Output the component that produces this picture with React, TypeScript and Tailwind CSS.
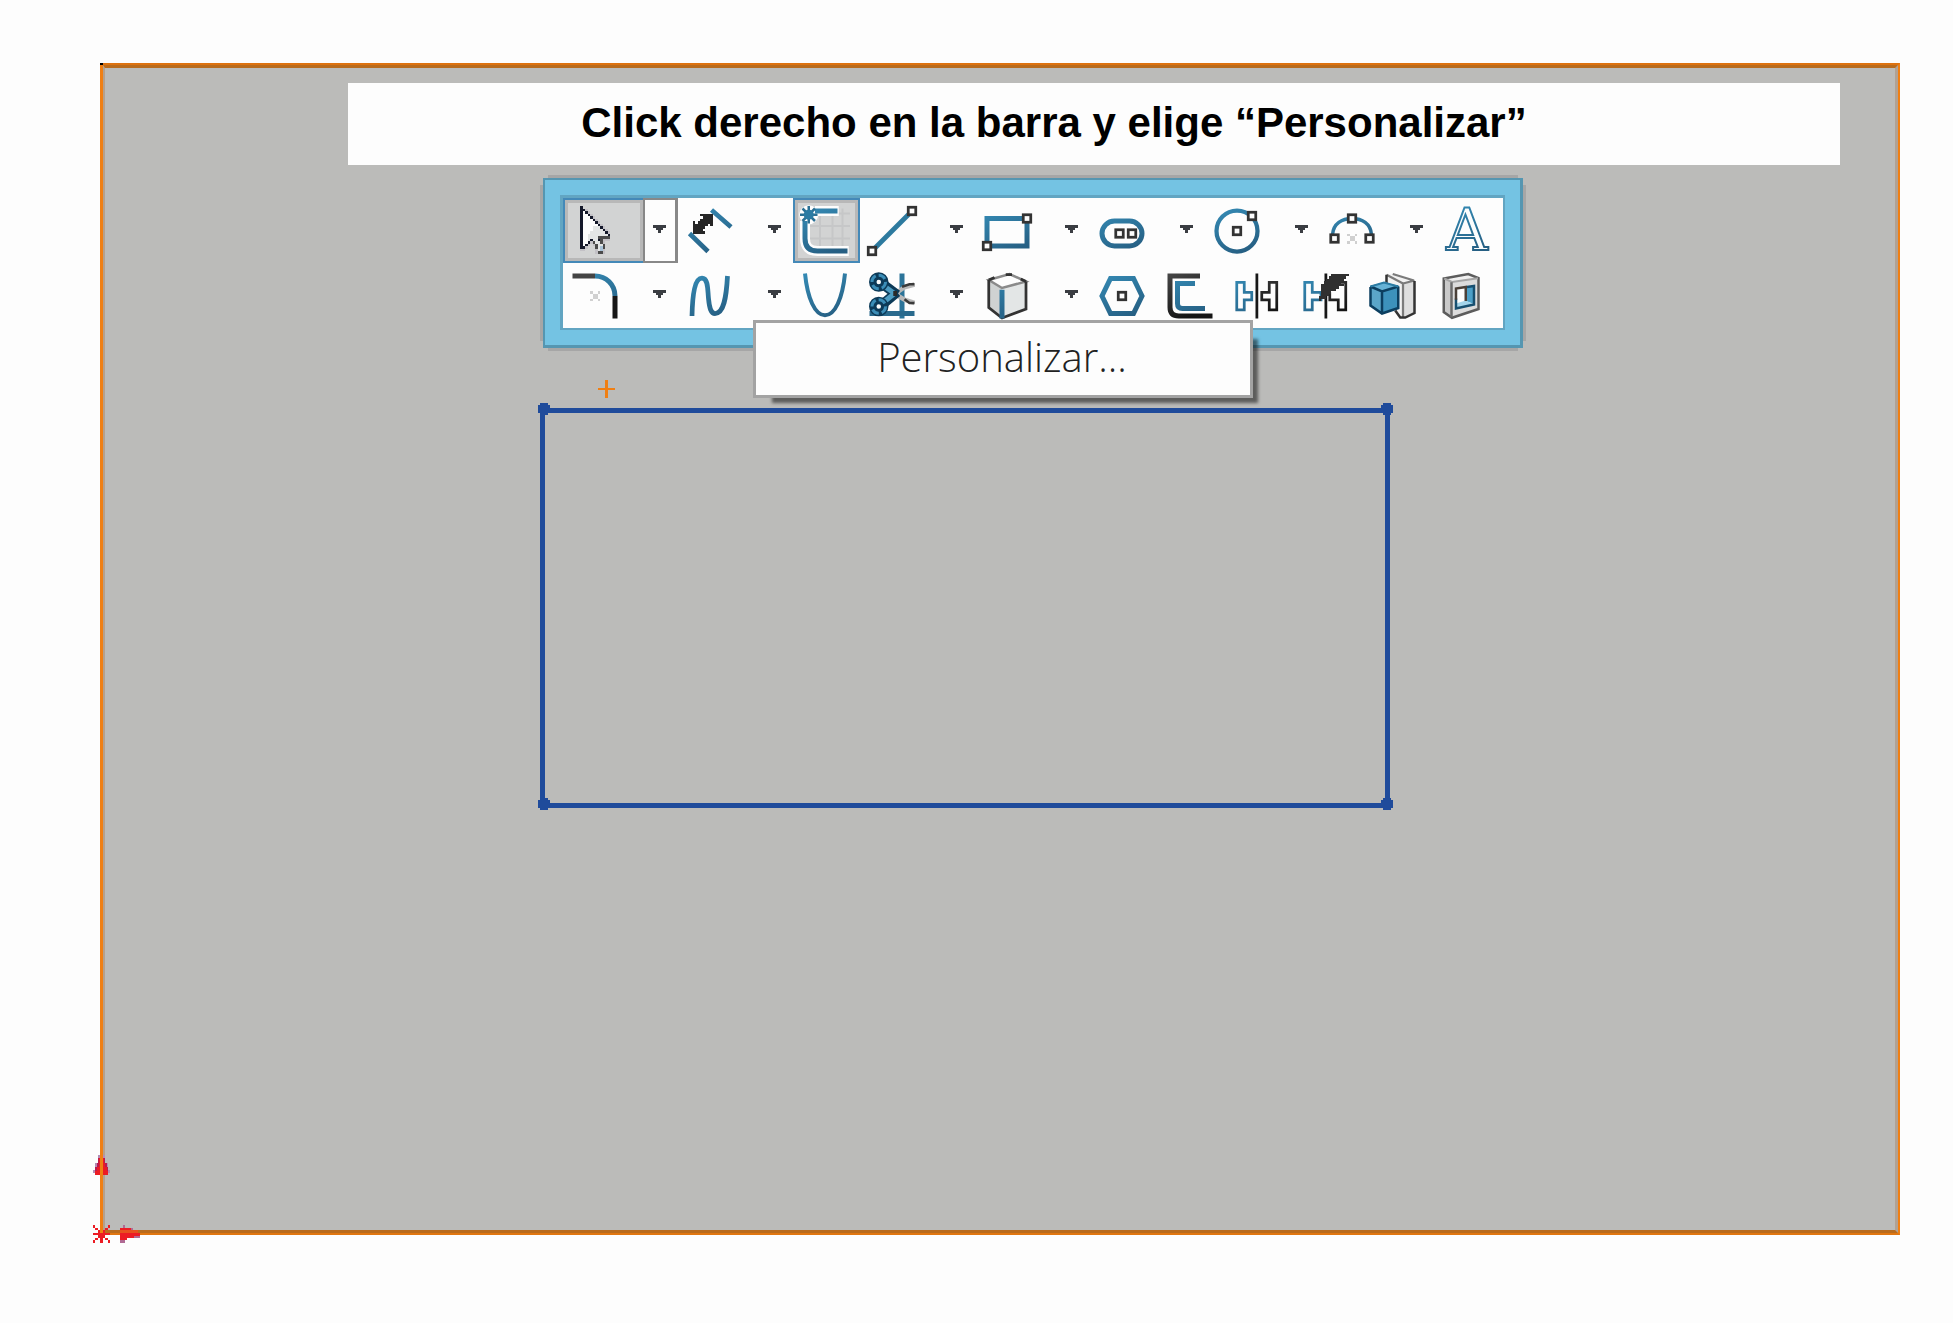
import React, { useState } from "react";

/* =========================
   PIXEL HELPERS
========================== */
const CURSOR = [
  "K",
  "KKg",
  "KWKg",
  "KWWKg",
  "KWWWKg",
  "KWWWWKg",
  "KWWWWWKg",
  "KWWWWWWKg",
  "KWWWWGGGKg",
  "KWWWWGGGGKg",
  "KWWWGGGGGGKg",
  "KWWGGGGGGGGK",
  "KWWGGGGDDDDD",
  "KWWGKGGKDggg",
  "KWWKgDGGDg",
  "KWKg.gDGGD",
  "KKg...DGBD",
  "gg....gGBg",
  "......gDDg",
];

const PALETTE: Record<string, string> = {
  K: "#14182a",
  W: "#fdfdfd",
  G: "#e4e6e6",
  g: "#c3c1c6",
  D: "#4b4b4b",
  B: "#a9c3d8",
};

const Pixels = ({ rows, x, y }: { rows: string[]; x: number; y: number }) => (
  <g shapeRendering="crispEdges">
    {rows.map((row, r) =>
      row.split("").map((c, i) =>
        PALETTE[c] ? (
          <rect key={`${r}-${i}`} x={x + i} y={y + r} width="1" height="1" fill={PALETTE[c]} />
        ) : null
      )
    )}
  </g>
);

const Handle = ({ x, y }: { x: number; y: number }) => (
  <rect
    x={x + 0.5}
    y={y + 0.5}
    width="3"
    height="3"
    fill="#fdfdfd"
    stroke="#333333"
    strokeWidth="1.1"
  />
);

const Ghost = ({ x, y }: { x: number; y: number }) => (
  <path
    d={`M${x} ${y}h1v1h2v-1h1v1h-1v2h1v1h-1v-1h-2v1h-1v-1h1v-2h-1z`}
    fill="#d0d0d0"
    shapeRendering="crispEdges"
  />
);

const Icon = ({ children }: { children: React.ReactNode }) => (
  <svg viewBox="0 0 20 20" className="h-[50px] w-[50px] shrink-0 overflow-visible" fill="none" aria-hidden="true">
    {children}
  </svg>
);

/* =========================
   ICONS
========================== */
const BLUE = "url(#blue)";

const icons = {
  select: <Pixels rows={CURSOR} x={4} y={0} />,
  dimension: (
    <>
      <path d="M10.6 1.6 18.4 8.4M1.8 11 9.2 18.2" stroke={BLUE} strokeWidth="1.9" />
      <path
        d="M6 3H11V8H10V7H9V8H8V9H7V10H8V11H3V6H4V7H5V6H6V5H7V4H6Z"
        fill="#262626"
        shapeRendering="crispEdges"
      />
    </>
  ),
  sketch: (
    <>
      <path d="M8 1V19M13 1V19M17 1V19M4 8H20M4 13H20M6 3H20" stroke="#c6c7c8" strokeWidth="0.8" />
      <path d="M6 2H15.5M2 6V13Q2 18 7 18H19.5" stroke="#fdfdfd" strokeWidth="4" />
      <circle cx="3.5" cy="3.5" r="3.8" fill="#fdfdfd" />
      <path d="M6 2H15M2 6V13Q2 18 7 18H19" stroke={BLUE} strokeWidth="2" />
      <path d="M3.5 0V7M0 3.5H7M1 1 6 6M6 1 1 6" stroke="#2b7094" strokeWidth="1" />
      <circle cx="3.5" cy="3.5" r="2" fill="#2b7ba3" />
    </>
  ),
  line: (
    <>
      <path d="M3 17 17 3" stroke="#2d7a9f" strokeWidth="1.9" />
      <Handle x={0} y={16} />
      <Handle x={16} y={0} />
    </>
  ),
  rectangle: (
    <>
      <rect x="2" y="5" width="16" height="11" stroke={BLUE} strokeWidth="2" />
      <Handle x={0} y={14} />
      <Handle x={16} y={3} />
    </>
  ),
  slot: (
    <>
      <rect x="2" y="6" width="16" height="10" rx="5" stroke={BLUE} strokeWidth="2" />
      <Handle x={7} y={9} />
      <Handle x={12} y={9} />
    </>
  ),
  circle: (
    <>
      <circle cx="10" cy="10" r="8.2" stroke={BLUE} strokeWidth="1.7" />
      <Handle x={8} y={8} />
      <Handle x={14} y={2} />
    </>
  ),
  arc: (
    <>
      <path d="M2.2 11.5C2.5 7 6 5 10 5S17.5 7 17.8 11.5" stroke={BLUE} strokeWidth="1.4" />
      <Handle x={1} y={11} />
      <Handle x={15} y={11} />
      <Handle x={8} y={3} />
      <Ghost x={8} y={11} />
    </>
  ),
  text: (
    <text
      x="10"
      y="17.6"
      textAnchor="middle"
      fontSize="23"
      stroke={BLUE}
      strokeWidth="0.8"
      fill="#fdfdfd"
      className="font-['DejaVu_Serif',serif]"
    >
      A
    </text>
  ),
  fillet: (
    <>
      <rect x="1" y="1" width="9" height="2" fill="#444444" />
      <path d="M10 2C14.5 2 18 5.5 18 10" stroke={BLUE} strokeWidth="2" />
      <rect x="17" y="10" width="2" height="9" fill="#171717" />
      <Ghost x={8} y={8} />
    </>
  ),
  spline: (
    <path
      d="M2.8 18C3 9 4 2.9 6.8 2.9C9.3 2.9 9 7 9.4 11C9.8 15 10.4 17 12 17C15.5 17 16.5 11 17 2"
      stroke={BLUE}
      strokeWidth="1.9"
    />
  ),
  parabola: (
    <path d="M2 1C3 11 6 17.7 10 17.7S17 11 18 1" stroke={BLUE} strokeWidth="1.6" />
  ),
  trim: (
    <>
      <rect x="13" y="1" width="2" height="18" fill="#2c7499" />
      <rect x="1" y="16" width="18" height="2" fill="#2a6a8d" />
      <path d="M10 10 15 6.5 19 5.4M10 8.5 15 11.5 19 12.8" stroke="#b9b9b9" strokeWidth="1.8" />
      <path d="M14 6.3 17 5.3H19M15 11.3 17 12.8H19" stroke="#3a3a3a" strokeWidth="1" />
      <path d="M6 5 12 9.5M6 13.5 12 8.5" stroke="#0c3a58" strokeWidth="4" />
      <path d="M6 5.4 11 9M6 13 11 9" stroke="#4d9cc2" strokeWidth="2" />
      <circle cx="4.7" cy="4.4" r="2.4" stroke="#0c3a58" strokeWidth="3" fill="#fdfdfd" />
      <circle cx="4.7" cy="14.2" r="2.4" stroke="#0c3a58" strokeWidth="3" fill="#fdfdfd" />
      <circle cx="4.7" cy="4.4" r="2.7" stroke="#3b8db7" strokeWidth="1.2" strokeDasharray="3 1.2" />
      <circle cx="4.7" cy="14.2" r="2.7" stroke="#3b8db7" strokeWidth="1.2" strokeDasharray="3 1.2" />
      <rect x="10.5" y="8" width="1.5" height="2" fill="#2a2a2a" />
    </>
  ),
  solid: (
    <>
      <path d="M2.7 3.6 11 1.2 17.6 4.2V15.2L8 18.6 2.7 14.6Z" fill="#e3e6e6" />
      <path d="M2.7 3.6 8 6.8V18.6L2.7 14.6Z" fill="#cfd2d2" />
      <path d="M2.7 3.6 11 1.2 17.6 4.2 8 6.8Z" fill="#fdfdfd" />
      <path d="M2.7 3.6 11 1.2 17.6 4.2 8 6.8Z" stroke="#8a8a8a" strokeWidth="1" />
      <path d="M2.7 3.6V14.6L8 18.8 17.6 15.2V4.2" stroke="#333333" strokeWidth="1.1" />
      <path d="M2.7 3.6 5 2.6M9.5 1.4 12 1.4M15.5 3.2 17.6 4.2" stroke="#333333" strokeWidth="1.1" />
      <rect x="7" y="7.5" width="2" height="11.5" fill={BLUE} />
    </>
  ),
  polygon: (
    <>
      <path d="M5.4 3H14.6L18 10 14.6 17H5.4L2 10Z" stroke={BLUE} strokeWidth="2" />
      <Handle x={8} y={8} />
    </>
  ),
  offset: (
    <>
      <path d="M14 2H2V14.5Q2 18 5.5 18H19" stroke="url(#dark)" strokeWidth="2" />
      <path d="M12 5H5V13Q5 15 7 15H16" stroke={BLUE} strokeWidth="2" />
    </>
  ),
  mirror: (
    <>
      <path d="M1.5 4.5H4.5V8.5H7.5V11.5H4.5V15.5H1.5Z" stroke={BLUE} strokeWidth="1.1" />
      <path d="M17.5 4.5H14.5V8.5H11.5V11.5H14.5V15.5H17.5Z" stroke="url(#dark)" strokeWidth="1.1" />
      <rect x="9" y="1" width="1.1" height="18" fill="#171717" />
    </>
  ),
  dynamicMirror: (
    <>
      <path d="M1.5 4.5H4.5V8.5H8V11.5H4.5V15.5H1.5Z" stroke={BLUE} strokeWidth="1.1" />
      <path d="M15.5 4.5H17.9V15.5H14.9V11.5H11.5V8.5" stroke="url(#dark)" strokeWidth="1.1" />
      <rect x="9.4" y="1" width="1.1" height="18" fill="#171717" />
      <path
        d="M12 1H19V2H18V3H17V4H16V5H17V6H15V7H14V8H12V9H11V10H10V11H8V12H7V10H8V5H9V4H10V3H11V2H12Z"
        fill="#303030"
        shapeRendering="crispEdges"
      />
    </>
  ),
  bossCut: (
    <>
      <path d="M6.5 1.6 9.5 1 18.3 3.9V17L14 19 6.5 14Z" fill="#f2f2f2" />
      <path d="M13.8 5.2 18.2 3.8V16.8L13.8 18.5Z" fill="#dedede" />
      <path d="M7 1.5 13.6 5M13.6 5V18.6M13.6 5 18.2 3.8M9.5 1.2 18 3.8" stroke="#7b7b7b" strokeWidth="0.9" />
      <path d="M7 1.5V6M18.2 4V16.8L14.5 18.6H12.5L10.5 15.8" stroke="#333333" strokeWidth="1" />
      <path d="M0.4 6 6 4.6 12 6V15L5.2 17 0.4 14Z" fill="#3d92bc" />
      <path d="M0.4 6 6 4.4 12 6 5.2 8.2Z" fill="#66b2d6" />
      <path d="M0.8 6.5 5 8.5V16.6L0.8 13.8Z" fill="#5ba6c9" />
      <path d="M0.6 6.4V13.8L5.2 17 11.7 14.8V6.2M0.6 6.2 5.2 8.2 11.7 6.2M5.2 8.2V16.8" stroke="#0c3f60" strokeWidth="1" />
      <path d="M0.6 6.2 6 4.6 11.7 6.2" stroke="#2b7ba3" strokeWidth="0.8" />
    </>
  ),
  shell: (
    <>
      <path d="M2.7 3 12 1.2 16.6 2.8V15.2L6 18.8 2.7 16.5Z" fill="#f0f0f0" />
      <path d="M2.7 3 6 4.5V18.6L2.7 16.5Z" fill="#c9c9c9" />
      <path d="M6 4.4 16.6 2.8V15.2L6 18.6Z" fill="#dcdcdc" />
      <path d="M2.7 3V16.4L6 18.7 16.6 15.2V2.8L12.5 1.2 2.7 3Z" stroke="#5c5c5c" strokeWidth="1" />
      <path d="M2.9 3 6 4.4 16.4 2.9" stroke="#a5a5a5" strokeWidth="0.8" />
      <path d="M5.8 4.5V18.4" stroke="#6c6c6c" strokeWidth="1" />
      <path d="M7.6 7 14.8 6V13.6L7.6 15Z" fill="#fdfdfd" />
      <path d="M11.5 6.4 14.8 6V13.2L11.5 12Z" fill="#4c9fc7" />
      <path d="M7.6 15V13L11.5 11.8 14.8 13.4Z" fill="#a4d4ea" />
      <path d="M7.6 11V15L14.8 13.4V6L12 6.4" stroke="#174f70" strokeWidth="1" />
      <path d="M7.6 11.5V7L11.5 6.4V12" stroke="#4a4038" strokeWidth="1" />
    </>
  ),
};

type IconName = keyof typeof icons;
type Tool = { id: IconName; label: string; menu?: boolean; toggle?: boolean };

const ROWS: Tool[][] = [
  [
    { id: "select", label: "Seleccionar", menu: true },
    { id: "dimension", label: "Cota inteligente", menu: true },
    { id: "sketch", label: "Croquis", toggle: true },
    { id: "line", label: "Línea", menu: true },
    { id: "rectangle", label: "Rectángulo", menu: true },
    { id: "slot", label: "Ranura", menu: true },
    { id: "circle", label: "Círculo", menu: true },
    { id: "arc", label: "Arco", menu: true },
    { id: "text", label: "Texto" },
  ],
  [
    { id: "fillet", label: "Redondeo", menu: true },
    { id: "spline", label: "Spline", menu: true },
    { id: "parabola", label: "Parábola", toggle: true },
    { id: "trim", label: "Recortar", menu: true },
    { id: "solid", label: "Convertir", menu: true },
    { id: "polygon", label: "Polígono" },
    { id: "offset", label: "Equidistanciar" },
    { id: "mirror", label: "Simetría" },
    { id: "dynamicMirror", label: "Simetría dinámica" },
    { id: "bossCut", label: "Extruir" },
    { id: "shell", label: "Vaciado" },
  ],
];

/* =========================
   TOOLBAR
========================== */
const ToolButton = ({ tool, active, onPick }: { tool: Tool; active: boolean; onPick: () => void }) => {
  const width = tool.menu ? "w-[80px]" : tool.toggle ? "w-[67px]" : "w-[68px]";
  const state = active
    ? "border-[#4489b8] bg-[#d2d3d3] shadow-[inset_0_0_0_3px_#b8b8b8]"
    : "border-transparent";

  return (
    <div className="flex h-[65px]">
      <button
        aria-label={tool.label}
        aria-pressed={active}
        onClick={onPick}
        className={`flex items-center border-y-2 border-l-2 pl-[5px] ${tool.menu ? "" : "border-r-2"} ${width} ${state}`}
      >
        <Icon>{icons[tool.id]}</Icon>
      </button>
      {tool.menu && (
        <button
          aria-label={`Más: ${tool.label}`}
          className={`flex w-[35px] items-center justify-center border-2 border-r-3 pr-[2px] pb-[3px] ${
            active ? "border-[#888888]" : "border-transparent"
          }`}
        >
          <svg viewBox="0 0 5 3" className="h-[8px] w-[13px]" shapeRendering="crispEdges" aria-hidden="true">
            <path d="M0 0H5V1H4V2H3V3H2V2H1V1H0Z" fill="#3a3d42" />
          </svg>
        </button>
      )}
    </div>
  );
};

/* =========================
   SKETCH CORNER
========================== */
const Corner = ({ className }: { className: string }) => (
  <svg viewBox="0 0 5 5" className={`absolute h-[12px] w-[12px] ${className}`} shapeRendering="crispEdges">
    <path d="M1 0H4V1H5V4H4V5H1V4H0V1H1Z" fill="#1f4b9b" />
  </svg>
);

export default function App() {
  const [tool, setTool] = useState<IconName>("select");

  return (
    <div className="flex min-h-screen flex-col bg-[#fdfdfd] pt-[63px] pr-[53px] pb-[88px] pl-[100px]">
      <svg className="absolute h-0 w-0" aria-hidden="true">
        <defs>
          <linearGradient id="blue" gradientUnits="userSpaceOnUse" x1="4" y1="1" x2="12" y2="19">
            <stop offset="0" stopColor="#3489b3" />
            <stop offset="1" stopColor="#265f83" />
          </linearGradient>
          <linearGradient id="dark" gradientUnits="userSpaceOnUse" x1="0" y1="1" x2="8" y2="19">
            <stop offset="0" stopColor="#474747" />
            <stop offset="1" stopColor="#151515" />
          </linearGradient>
        </defs>
      </svg>

      {/* Drawing sheet */}
      <main className="relative flex flex-1 flex-col border-t-2 border-r-2 border-b-2 border-l-3 border-t-[#dd7210] border-r-[#f07f13] border-b-[#e07610] border-l-[#f07f13]">
        <div className="flex-1 border-t-3 border-r-3 border-b-3 border-l-2 border-t-[#b96b1d] border-r-[#b1a193] border-b-[#b96b1d] border-l-[#b5a08c] bg-[#bbbbb9]">
          {/* Banner */}
          <h1 className="mt-[15px] mr-[55px] ml-[243px] flex h-[82px] items-center justify-center bg-[#fdfdfd] pr-[80px] pb-[2px] font-['Liberation_Sans',Arial,sans-serif] text-[42px] leading-[48px] font-bold text-black">
            Click derecho en la barra y elige “Personalizar”
          </h1>

          {/* Toolbar */}
          <div className="relative mt-[13px] ml-[438px] w-fit">
            <div className="border-t-2 border-r-3 border-b-3 border-l-2 border-[#5596b1] bg-[#74c3e3] p-[15px] shadow-[0_-8px_0_-5px_#a6a6a6,0_8px_0_-5px_#a6a6a6,-10px_0_0_-7px_#a6a6a6,10px_0_0_-7px_#a6a6a6]">
              <div role="toolbar" className="border-t-3 border-r-2 border-b-2 border-l-3 border-[#62a5c2] bg-[#fdfdfd]">
                {ROWS.map((row, i) => (
                  <div key={i} className="flex">
                    {row.map((t) => (
                      <ToolButton
                        key={t.id}
                        tool={t}
                        active={t.id === tool || t.id === "sketch"}
                        onPick={() => setTool(t.id)}
                      />
                    ))}
                  </div>
                ))}
              </div>
            </div>

            {/* Context menu */}
            <button className="absolute top-[142px] left-[210px] z-10 flex h-[78px] w-[500px] items-center justify-center border-3 border-[#a3a3a3] bg-[#fdfdfd] pr-[2px] pb-[4px] font-['Open_Sans','Noto_Sans',sans-serif] text-[40px] leading-[48px] font-light text-[#222222] shadow-[12px_12px_3px_-7px_rgba(0,0,0,0.5)]">
              Personalizar...
            </button>
          </div>

          {/* Sketch */}
          <div className="relative mt-[60px] ml-[435px] h-[400px] w-[850px] border-5 border-[#1f4b9b]">
            <Corner className="-top-[10px] -left-[7px]" />
            <Corner className="-top-[10px] -right-[8px]" />
            <Corner className="-bottom-[7px] -left-[7px]" />
            <Corner className="-right-[8px] -bottom-[7px]" />
            <svg viewBox="0 0 17 18" className="absolute -top-[33px] left-[53px] h-[18px] w-[17px]" shapeRendering="crispEdges">
              <path d="M7 0H10V18H7ZM0 8H17V10H0Z" fill="#f07f13" />
            </svg>
          </div>
        </div>

        {/* Origin marker */}
        <span className="absolute -top-[2px] -left-[3px] h-[2px] w-[3px] bg-black" />
        <svg
          viewBox="0 0 56 88"
          className="absolute -bottom-[10px] -left-[10px] h-[88px] w-[56px]"
          shapeRendering="crispEdges"
        >
          <path d="M5 0H12V8H15V15H17V18H0V15H2V8H5Z" fill="#b58db5" />
          <path d="M5 3H12V8H14V12H15V20H2V12H4V8H5Z" fill="#b81c50" />
          <path d="M6 3H11V8H12V12H14V16H15V20H2V16H4V12H6Z" fill="#ec1c24" />
          <rect x="7" y="0" width="3" height="78" fill="#f07f13" />
          <path d="M30 70H32V73H40V75H45V78H47V83H32V88H27V73H30Z" fill="#b06a94" />
          <path d="M27 73H38V75H43V78H47V81H41V83H34V85H27Z" fill="#ec1c24" />
          <rect x="27" y="75" width="18" height="3" fill="#e8501e" />
          <path
            d="M0 70H2V73H5V75H7V78H10V75H12V73H15V70H17V73H15V75H12V78H17V80H12V83H15V85H17V88H15V85H12V83H10V88H7V83H5V85H2V88H0V85H2V83H5V80H0V78H5V75H2V73H0Z"
            fill="#ec1c24"
          />
        </svg>
      </main>
    </div>
  );
}
